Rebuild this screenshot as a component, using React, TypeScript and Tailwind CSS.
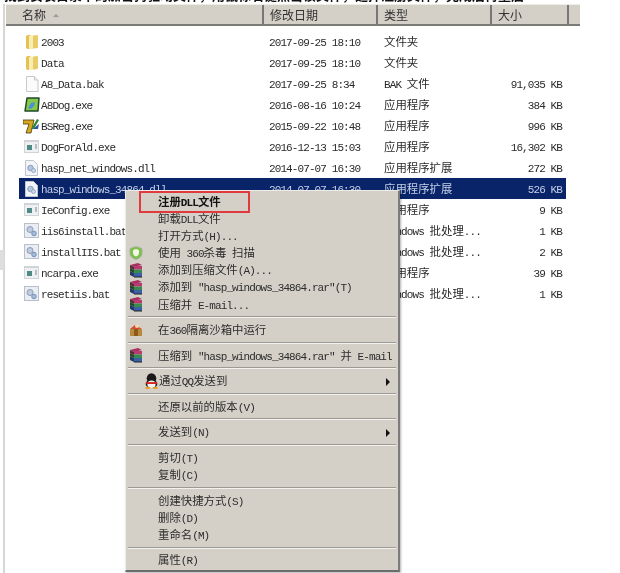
import React from "react";

const FONT = "[font-family:'Liberation_Mono','Noto_Sans_CJK_SC',monospace]";

// latin and CJK runs need different sizes to get the cell widths of the original bitmap font
function T({ s }: { s: string }) {
  const parts = s.split(/([\u3000-\u9fff\uff00-\uffef]+)/).filter(Boolean);
  return (
    <>
      {parts.map((p, i) =>
        /[\u3000-\u9fff\uff00-\uffef]/.test(p) ? (
          <span key={i} className="text-[11.4px] font-['Noto_Sans_CJK_SC']">{p}</span>
        ) : (
          <span key={i} className="text-[11px] tracking-[-0.9px] whitespace-pre">{p}</span>
        )
      )}
    </>
  );
}

function Folder() {
  return (
    <svg width="14" height="16" viewBox="0 0 14 16">
      <path d="M1 3q0-2 2-2h2l1 1v13H3q-2 0-2-2z" fill="#e6c050" />
      <path d="M6 2l6-1q1 0 1 1v11q0 1-1 1l-6 1z" fill="#e9cc68" />
      <path d="M4 2h4v13H4z" fill="#f8eeb4" />
    </svg>
  );
}

function BlankFile() {
  return (
    <svg width="14" height="16" viewBox="0 0 14 16">
      <path d="M1.5.5h8l3.5 3.5v11.500h-11.500z" fill="#fbfbfb" stroke="#c8c8c8" />
      <path d="M9.500.5v3.500h3.500" fill="#eee" stroke="#c8c8c8" />
    </svg>
  );
}

function Dog() {
  return (
    <svg width="16" height="16" viewBox="0 0 16 16">
      <path d="M3 1h12l-1 13H1z" fill="#86c848" stroke="#1f4a2a" strokeWidth="1.500" strokeLinejoin="round" />
      <path d="M4 11l3-5 4-1-1 4-3 3z" fill="#4a90d8" />
    </svg>
  );
}

function BsReg() {
  return (
    <svg width="17" height="16" viewBox="0 0 17 16">
      <path d="M0 2h11l-3 13H3l3-9H0z" fill="#d8a820" stroke="#4a3810" strokeWidth=".8" />
      <path d="M8 11l6-10 2 1-5 9z" fill="#2f8a3c" />
      <path d="M10 11l6-5-1 5z" fill="#3050a8" />
    </svg>
  );
}

function WinApp() {
  return (
    <svg width="15" height="13" viewBox="0 0 15 13">
      <rect x="0" y="0" width="15" height="13" fill="#d0d4d8" />
      <rect x="1" y="2" width="13" height="10" fill="#eef0f2" />
      <rect x="3" y="5" width="5" height="5" fill="#4f8a86" />
      <rect x="11" y="4" width="2" height="5" fill="#b4bcc8" />
    </svg>
  );
}

function Dll() {
  return (
    <svg width="13" height="16" viewBox="0 0 13 16">
      <path d="M.5.5h8l4 4v11H.5z" fill="#f2f4f8" stroke="#c0c6d0" />
      <circle cx="5.500" cy="8" r="2.800" fill="#b4c6de" stroke="#8aa0c0" />
      <circle cx="8.500" cy="10.500" r="2" fill="#ccd8e8" stroke="#92a8c6" />
    </svg>
  );
}

function Bat() {
  return (
    <svg width="15" height="15" viewBox="0 0 15 15">
      <rect x=".5" y=".5" width="14" height="14" fill="#eaeef4" stroke="#b8c0ca" />
      <circle cx="6" cy="6.500" r="3" fill="#c0cce0" stroke="#8c9cb8" />
      <circle cx="10" cy="10.500" r="2.300" fill="#a4bcdc" stroke="#7890b8" />
    </svg>
  );
}

function Rar() {
  return (
    <svg width="14" height="15" viewBox="0 0 14 15">
      <path d="M1 2l8-2 4 2-8 2z" fill="#a83060" />
      <path d="M1 2l4 2v3L1 5z" fill="#5a2a34" />
      <rect x="5" y="3" width="8" height="3.500" fill="#b83a70" />
      <path d="M1 5l4 2v3L1 8z" fill="#24482a" />
      <rect x="5" y="6.500" width="8" height="3.500" fill="#3a8a50" />
      <path d="M1 8l4 2v4l-4-2z" fill="#223a60" />
      <rect x="5" y="10" width="8" height="4" fill="#3a60a8" />
      <rect x="5" y="13.500" width="8" height="1" fill="#222" />
    </svg>
  );
}

function Shield() {
  return (
    <svg width="14" height="14" viewBox="0 0 14 14">
      <path d="M7 .5l6 2v5c0 3-3 5-6 6-3-1-6-3-6-6v-5z" fill="#7cc04a" stroke="#a8b4a0" />
      <path d="M7 3l3 1v3c0 1.500-1.500 3-3 3.500C5.500 10 4 8.500 4 7V4z" fill="#f2f8e8" />
    </svg>
  );
}

function Sandbox() {
  return (
    <svg width="14" height="14" viewBox="0 0 14 14">
      <rect x="1" y="6" width="12" height="7" fill="#b88a3a" />
      <rect x="5" y="6" width="4" height="7" fill="#8a5a20" />
      <path d="M1 6l5-4 2 1 5 3z" fill="#d84a30" />
      <circle cx="8" cy="3" r="2" fill="#f0d8b0" />
    </svg>
  );
}

function QQ() {
  return (
    <svg width="15" height="16" viewBox="0 0 14 15">
      <ellipse cx="7" cy="5" rx="4.500" ry="4.800" fill="#1a1a1a" />
      <ellipse cx="7" cy="10" rx="5.500" ry="4" fill="#1a1a1a" />
      <ellipse cx="7" cy="10.500" rx="3.800" ry="3.500" fill="#f4f4f4" />
      <path d="M2 8.500h10v1.800H2z" fill="#d8281c" />
      <ellipse cx="3.500" cy="14" rx="2.500" ry="1" fill="#e8a020" />
      <ellipse cx="10.500" cy="14" rx="2.500" ry="1" fill="#e8a020" />
    </svg>
  );
}

const files: [React.ReactNode, string, string, string, string][] = [
  [<Folder />, "2003", "2017-09-25 18:10", "文件夹", ""],
  [<Folder />, "Data", "2017-09-25 18:10", "文件夹", ""],
  [<BlankFile />, "A8_Data.bak", "2017-09-25 8:34", "BAK 文件", "91,035 KB"],
  [<Dog />, "A8Dog.exe", "2016-08-16 10:24", "应用程序", "384 KB"],
  [<BsReg />, "BSReg.exe", "2015-09-22 10:48", "应用程序", "996 KB"],
  [<WinApp />, "DogForAld.exe", "2016-12-13 15:03", "应用程序", "16,302 KB"],
  [<Dll />, "hasp_net_windows.dll", "2014-07-07 16:30", "应用程序扩展", "272 KB"],
  [<Dll />, "hasp_windows_34864.dll", "2014-07-07 16:30", "应用程序扩展", "526 KB"],
  [<WinApp />, "IeConfig.exe", "2014-07-07 16:30", "应用程序", "9 KB"],
  [<Bat />, "iis6install.bat", "2014-07-07 16:30", "Windows 批处理...", "1 KB"],
  [<Bat />, "installIIS.bat", "2014-07-07 16:30", "Windows 批处理...", "2 KB"],
  [<WinApp />, "ncarpa.exe", "2014-07-07 16:30", "应用程序", "39 KB"],
  [<Bat />, "resetiis.bat", "2014-07-07 16:30", "Windows 批处理...", "1 KB"],
];

function Row({ f, selected }: { f: (typeof files)[number]; selected: boolean }) {
  return (
    <div className={`flex h-[21px] items-center ${selected ? "bg-[#0a246a] text-[#c4d0e6]" : "text-[#2a2a2a]"}`}>
      <div className="flex w-[250px] items-center">
        <div className="flex w-[22px] justify-center pl-[3px]">{f[0]}</div>
        <span><T s={f[1]} /></span>
      </div>
      <div className="w-[115px]"><T s={f[2]} /></div>
      <div className="w-[120px] whitespace-nowrap"><T s={f[3]} /></div>
      <div className="flex-1 pr-[4px] text-right"><T s={f[4]} /></div>
    </div>
  );
}

function HeaderCell({ label, className }: { label: string; className: string }) {
  return (
    <div className={`flex h-full items-center border-r-2 border-[#777] pl-[6px] text-[#333] ${className}`}>
      <span className="text-[12px] font-['Noto_Sans_CJK_SC']">{label}</span>
    </div>
  );
}

function Sep() {
  return (
    <div className="flex h-[8.4px] flex-col justify-center px-[1px]">
      <div className="h-[1px] bg-[#9c9a94]" />
      <div className="h-[1px] bg-[#f4f2ee]" />
    </div>
  );
}

function Item({ text, icon, bold, arrow, qq }: { text: string; icon?: React.ReactNode; bold?: boolean; arrow?: boolean; qq?: boolean }) {
  return (
    <div className={`relative flex h-[17.17px] items-center text-[#2c2c2c] ${bold ? "font-bold text-[#111]" : ""}`}>
      <div className={`flex shrink-0 items-center ${qq ? "w-[32px] justify-end" : "w-[31px] pl-[2px]"}`}>{icon}</div>
      <span className="whitespace-nowrap"><T s={text} /></span>
      {arrow && <div className="absolute right-[7px] top-[5px] h-0 w-0 border-y-[4px] border-l-[4px] border-y-transparent border-l-[#111]" />}
    </div>
  );
}

export default function App() {
  return (
    <div className={`relative h-[573px] w-[620px] overflow-hidden bg-white blur-[0.35px] ${FONT}`}>
      {/* clipped line of the article text above the picture */}
      <div className="mb-[1px] h-[3px] overflow-hidden pl-[4px]">
        <div className="-mt-[12px] whitespace-nowrap text-[13px] font-bold leading-[14px] text-[#111] font-['Noto_Sans_CJK_SC']">
          找到安装目录下的加密狗驱动文件，用鼠标右键点击该文件，选择注册文件，完成后再重启
        </div>
      </div>

      <div className="flex">
        {/* left edge of the window */}
        <div className="ml-[3px] h-[569px] w-[2px] bg-[#d8d6d0]" />
        <div className="w-[575px]">
          <div className="ml-[1px] flex h-[22px] items-center border-b-2 border-[#7c7a76] border-t border-t-[#eeece6] bg-[#d4d0c8]">
            <HeaderCell label="名称" className="w-[258px] pl-[16px]" />
            <HeaderCell label="修改日期" className="w-[114px]" />
            <HeaderCell label="类型" className="w-[114px]" />
            <HeaderCell label="大小" className="w-[77px]" />
          </div>
          <div className="ml-[14px] mr-[14px] mt-[5px]">
            {files.map((f, i) => (
              <Row key={f[1]} f={f} selected={i === 7} />
            ))}
          </div>
        </div>
      </div>
      <div className="absolute left-[53px] top-[14px] h-0 w-0 border-x-[3px] border-b-[3px] border-x-transparent border-b-[#999]" />
      <div className="absolute left-0 top-[250px] h-[20px] w-[4px] bg-[#dedede]" />

      {/* context menu */}
      <div className="absolute left-[125px] top-[190px] h-[382px] w-[275px] border-b-2 border-l border-r-2 border-t border-b-[#6c6c6c] border-l-[#eeece8] border-r-[#7c7c7c] border-t-[#eeece8] bg-[#d4d0c8] px-[1px] pt-[2px] shadow-[1px_1px_2px_rgba(0,0,0,0.3)]">
        <Item text="注册DLL文件" bold />
        <Item text="卸载DLL文件" />
        <Item text="打开方式(H)..." />
        <Item text="使用 360杀毒 扫描" icon={<Shield />} />
        <Item text="添加到压缩文件(A)..." icon={<Rar />} />
        <Item text={"添加到 \"hasp_windows_34864.rar\"(T)"} icon={<Rar />} />
        <Item text="压缩并 E-mail..." icon={<Rar />} />
        <Sep />
        <Item text="在360隔离沙箱中运行" icon={<Sandbox />} />
        <Sep />
        <Item text={"压缩到 \"hasp_windows_34864.rar\" 并 E-mail"} icon={<Rar />} />
        <Sep />
        <Item text="通过QQ发送到" icon={<QQ />} arrow qq />
        <Sep />
        <Item text="还原以前的版本(V)" />
        <Sep />
        <Item text="发送到(N)" arrow />
        <Sep />
        <Item text="剪切(T)" />
        <Item text="复制(C)" />
        <Sep />
        <Item text="创建快捷方式(S)" />
        <Item text="删除(D)" />
        <Item text="重命名(M)" />
        <Sep />
        <Item text="属性(R)" />
        {/* red annotation box */}
        <div className="absolute left-[13px] top-[0px] h-[22px] w-[111px] border-2 border-[#e0393e]" />
      </div>
    </div>
  );
}
